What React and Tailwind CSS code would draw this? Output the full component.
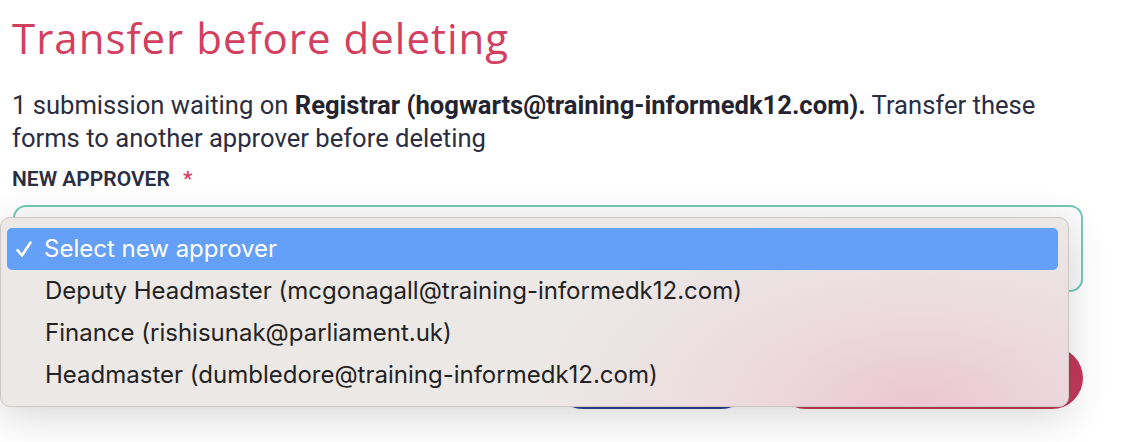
const approvers = [
  "Deputy Headmaster (mcgonagall@training-informedk12.com)",
  "Finance (rishisunak@parliament.uk)",
  "Headmaster (dumbledore@training-informedk12.com)",
];

function CheckMark() {
  return (
    <svg width="18" height="18" viewBox="0 0 18 18" fill="none">
      <path
        d="M2.5 10.2 L7 15.5 L15.5 2.5"
        stroke="white"
        strokeWidth="2.6"
        strokeLinecap="round"
        strokeLinejoin="round"
      />
    </svg>
  );
}

function ApproverMenu() {
  return (
    <div className="absolute left-0 top-[217px] w-[1069px] h-[190px] rounded-[10px] border border-[#cdc8c6] bg-[#ece8e6] bg-[radial-gradient(ellipse_380px_200px_at_86%_100%,#ebc6d1_0%,#ecdade_45%,#ece8e6_100%)] shadow-[0_10px_40px_rgba(0,0,0,0.16)] pt-[10px] pl-[6px] pr-[10px] font-['Inter',sans-serif] text-[24px] text-[#222222]">
      <div className="flex items-center h-[42px] rounded-[5px] bg-[#64a0f8] text-white pl-[8px]">
        <CheckMark />
        <span className="ml-[11px]">Select new approver</span>
      </div>
      {approvers.map((a) => (
        <div key={a} className="flex items-center h-[42px] pl-[38px]">
          {a}
        </div>
      ))}
    </div>
  );
}

function App() {
  return (
    <div className="relative w-[1128px] h-[442px] bg-white overflow-hidden">
      <div className="pl-[12px] pr-[45px] pt-[13px]">
        <h1 className="font-['Open_Sans',sans-serif] text-[42px] leading-[1.2] tracking-[1px] text-[#d3405f]">
          Transfer before deleting
        </h1>

        <p className="mt-[26px] font-['Roboto',sans-serif] text-[25.6px] leading-[33px] text-[#2b2d42]">
          1 submission waiting on{" "}
          <b className="font-bold text-[#23242f]">
            Registrar (hogwarts@training-informedk12.com).
          </b>{" "}
          Transfer these forms to another approver before deleting
        </p>

        <label className="block mt-[12px] font-['Roboto',sans-serif] text-[21px] leading-[24px] font-semibold text-[#2b2d42]">
          NEW APPROVER <span className="ml-[8px] text-[#d3405f]">*</span>
        </label>

        <div className="mt-[14px] ml-[1px] h-[87px] rounded-[13px] border-2 border-[#72c9b6] bg-[#fbfbfb]" />

        <div className="mt-[55px] flex justify-end gap-[23px]">
          <button className="w-[200px] h-[62px] rounded-full bg-[#2f3f8f] text-white font-['Roboto',sans-serif] text-[18px] font-medium">
            Cancel
          </button>
          <button className="w-[308px] h-[62px] rounded-full bg-[#c3395b] text-white font-['Roboto',sans-serif] text-[18px] font-medium">
            Transfer and delete
          </button>
        </div>
      </div>

      <ApproverMenu />
    </div>
  );
}

export default App;
